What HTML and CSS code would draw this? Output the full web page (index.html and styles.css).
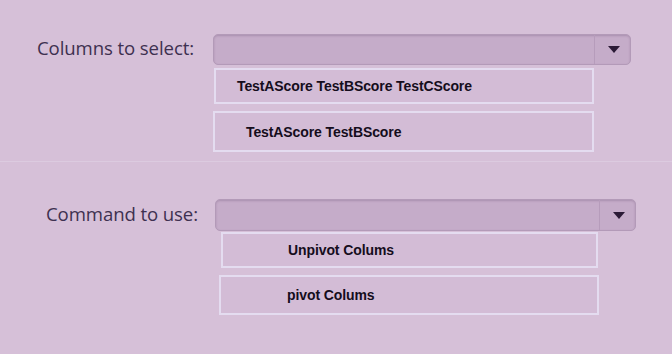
FILE: index.html
```html
<!DOCTYPE html>
<html lang="en">
<head>
<meta charset="utf-8">
<title>Pivot settings</title>
<link rel="stylesheet" href="styles.css">
</head>
<body>
<main class="page">
  <section class="group group-columns">
    <div class="field">
      <span class="label">Columns to select:</span>
      <div class="select">
        <span class="select-value"></span>
        <span class="select-btn"><svg width="12" height="7" viewBox="0 0 12 7"><path d="M0 0H12L6 7Z" fill="#2b1a36"/></svg></span>
      </div>
    </div>
    <div class="options">
      <div class="option opt-a">TestAScore TestBScore TestCScore</div>
      <div class="option opt-b">TestAScore TestBScore</div>
    </div>
  </section>
  <div class="divider"></div>
  <section class="group group-command">
    <div class="field">
      <span class="label">Command to use:</span>
      <div class="select">
        <span class="select-value"></span>
        <span class="select-btn"><svg width="12" height="7" viewBox="0 0 12 7"><path d="M0 0H12L6 7Z" fill="#2b1a36"/></svg></span>
      </div>
    </div>
    <div class="options">
      <div class="option opt-c">Unpivot Colums</div>
      <div class="option opt-d">pivot Colums</div>
    </div>
  </section>
</main>
</body>
</html>
```
FILE: styles.css
```css
html, body {
  margin: 0;
  padding: 0;
}
body {
  width: 672px;
  height: 354px;
  overflow: hidden;
  background: #d6c0d8;
  font-family: "Open Sans", "Liberation Sans", sans-serif;
}
.page {
  display: flex;
  flex-direction: column;
}
.group {
  display: flex;
  flex-direction: column;
}
.field {
  display: flex;
  align-items: center;
}
.label {
  box-sizing: border-box;
  font-size: 18.6px;
  font-weight: 500;
  letter-spacing: -0.1px;
  color: #3e3050;
  padding-bottom: 4px;
}
.select {
  box-sizing: border-box;
  display: flex;
  background: #c5acc9;
  border: 1px solid #b39ab8;
  border-radius: 5px;
  box-shadow: inset 0 1px 2px rgba(90, 60, 100, 0.25);
}
.select-value {
  flex: 1;
}
.select-btn {
  width: 33px;
  border-left: 1px solid #b69cbb;
  display: flex;
  align-items: center;
  justify-content: center;
  padding-left: 2px;
}
.options {
  display: flex;
  flex-direction: column;
}
.option {
  box-sizing: border-box;
  display: flex;
  align-items: center;
  border: 2px solid #e4dcf0;
  background: #d3bcd6;
  font-family: "Liberation Sans", "Open Sans", sans-serif;
  font-weight: bold;
  font-size: 14px;
  letter-spacing: -0.1px;
  color: #150d1c;
}

/* first group */
.group-columns {
  padding-top: 34px;
}
.group-columns .label {
  width: 213px;
  padding-left: 37px;
}
.group-columns .select {
  width: 418px;
  height: 31px;
}
.group-columns .options {
  padding-left: 213px;
}
.opt-a {
  margin-top: 3px;
  margin-left: 1px;
  width: 380px;
  height: 36px;
  padding-left: 21px;
}
.opt-b {
  margin-top: 7px;
  width: 381px;
  height: 41px;
  padding-left: 31px;
}

.divider {
  margin-top: 9px;
  height: 1px;
  background: #dccbe0;
}

/* second group */
.group-command {
  padding-top: 37px;
}
.group-command .label {
  width: 215px;
  padding-left: 46px;
}
.group-command .select {
  width: 421px;
  height: 32px;
}
.group-command .options {
  padding-left: 219px;
}
.opt-c {
  margin-top: 1px;
  margin-left: 2px;
  width: 377px;
  height: 36px;
  padding-left: 65px;
}
.opt-d {
  margin-top: 7px;
  width: 380px;
  height: 40px;
  padding-left: 66px;
}
```
